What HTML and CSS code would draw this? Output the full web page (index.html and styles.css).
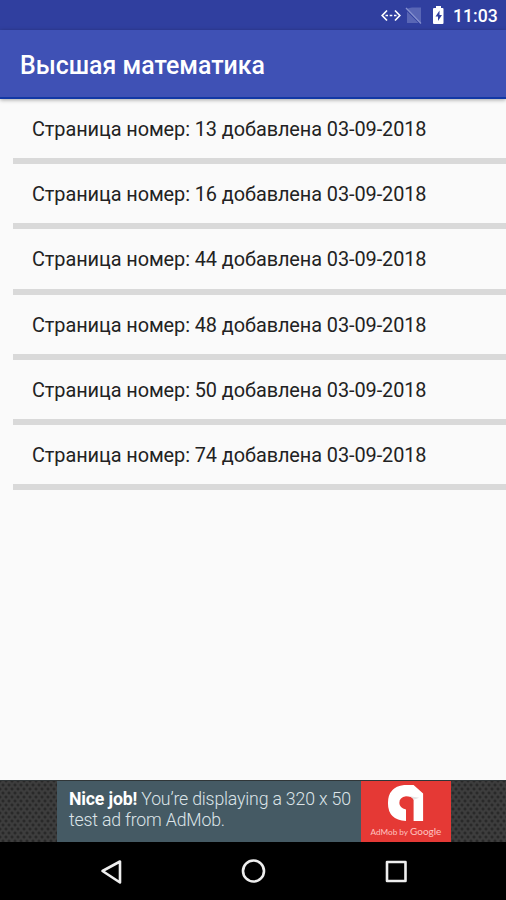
FILE: index.html
```html
<!DOCTYPE html>
<html lang="ru">
<head>
<meta charset="utf-8">
<title>Высшая математика</title>
<link rel="stylesheet" href="styles.css">
</head>
<body>
<div class="status">
  <svg class="status-icons" width="82" height="30" viewBox="0 0 82 30">
    <g fill="none" stroke="#fff" stroke-width="1.7"><path d="M8 10.500 3.200 15.500 8 20.500M16 10.500 20.800 15.500 16 20.500"/><path d="M6.500 15.500h2.500M10.700 15.500h2.600M15 15.500h2.500"/></g>
    <path fill="#5966b5" d="M33 7.500H42V23L28 9Q30 7.500 33 7.500ZM28 11.500 39.500 23H28Z"/>
    <path d="M27 8 42 23.500" stroke="#8792cf" stroke-width="1.300"/>
    <path fill="#fff" d="M57 6h5v2h1.500q1 0 1 1V23q0 1-1 1H55q-1 0-1-1V9q0-1 1-1h2Z"/>
    <path fill="#303f9f" d="M60.500 10.500 56.500 16.500H59V21L63 15H60.500Z"/>
  </svg>
  <span class="clock">11:03</span>
</div>
<header class="toolbar"><h1>Высшая математика</h1></header>
<main class="content">
  <ul class="pages">
    <li>Страница номер: 13 добавлена 03-09-2018</li>
    <li>Страница номер: 16 добавлена 03-09-2018</li>
    <li>Страница номер: 44 добавлена 03-09-2018</li>
    <li>Страница номер: 48 добавлена 03-09-2018</li>
    <li>Страница номер: 50 добавлена 03-09-2018</li>
    <li>Страница номер: 74 добавлена 03-09-2018</li>
  </ul>
</main>
<aside class="ad">
  <div class="ad-text"><div class="ad-line"><b>Nice job!</b> You’re displaying a 320 x 50</div><div class="ad-line second">test ad from AdMob.</div></div>
  <div class="ad-brand">
    <svg width="38" height="40" viewBox="0 0 40 42"><path fill="#fff" d="M18 3H28L38 12V41H28V18.500Q26 15 20 15Q13 16 13 22Q13 27 20 29V41Q1 40 1 22Q1 5 18 3Z"/><path fill="#e4e4e4" d="M21 14.500 34 16.500 28 18.500Q26 15 21 14.500Z"/></svg>
    <div class="brand-name"><span>AdMob by</span> <span class="google">Google</span></div>
  </div>
</aside>
<nav class="navbar">
  <svg width="506" height="58" viewBox="0 0 506 58" fill="none" stroke="#eee" stroke-width="2.600" stroke-linejoin="round">
    <path d="M102.500 29 120 19.500V40.500Z"/><circle cx="253.500" cy="29" r="10.500"/><rect x="387" y="20" width="18.500" height="19"/>
  </svg>
</nav>
</body>
</html>
```
FILE: styles.css
```css
* { box-sizing: border-box; }
body {
  margin: 0;
  width: 506px;
  height: 900px;
  display: flex;
  flex-direction: column;
  overflow: hidden;
  background: #fafafa;
  font-family: Roboto, sans-serif;
}
.status {
  height: 30px;
  flex: none;
  display: flex;
  align-items: center;
  padding-left: 379px;
  background: #303f9f;
  color: #fff;
}
.status-icons { display: block; flex: none; margin-right: -8px; }
.clock { font-size: 17.600px; font-weight: 500; line-height: 30px; padding-top: 2px; }
.toolbar {
  height: 69px;
  flex: none;
  padding-left: 20px;
  background: #3f51b5;
  border-bottom: 2px solid #1238a5;
  box-shadow: 0 1px 4px rgba(0, 0, 0, .35);
}
.toolbar h1 {
  margin: 0;
  color: #fff;
  font-size: 24.900px;
  font-weight: 500;
  line-height: 71px;
  white-space: nowrap;
}
.content { flex: 1; min-height: 0; }
.pages { list-style: none; margin: 0; padding: 0 0 0 13px; }
.pages li {
  height: 65.200px;
  padding-left: 19px;
  border-bottom: 6px solid #d9d9d9;
  color: #222;
  font-size: 19.900px;
  letter-spacing: -.08px;
  line-height: 62px;
  white-space: nowrap;
}
.ad {
  height: 62px;
  flex: none;
  display: flex;
  justify-content: center;
  padding-left: 2px;
  border-top: 1px solid #303638;
  background-color: #3d3d3d;
  background-image: radial-gradient(circle, #292929 1.100px, transparent 1.900px), radial-gradient(circle, #292929 1.100px, transparent 1.900px);
  background-size: 6px 8px;
  background-position: 0 0, 3px 4px;
}
.ad-text {
  width: 304px;
  padding: 8px 0 0 12px;
  background: #455a64;
  color: #dce4e8;
  font-size: 17.700px;
  font-weight: 300;
  letter-spacing: -.17px;
  line-height: 20px;
  white-space: nowrap;
}
.second { padding-top: 1px; }
.ad-text b { color: #fff; font-weight: 700; }
.ad-brand {
  width: 90px;
  background: #e53935;
  display: flex;
  flex-direction: column;
  align-items: center;
}
.ad-brand svg { flex: none; margin-top: 1px; }
.brand-name { color: #ffc4c0; font: 8.200px/19px Lato, sans-serif; white-space: nowrap; }
.google { font-size: 10px; }
.navbar { height: 58px; flex: none; background: #000; }
.navbar svg { display: block; }
```
